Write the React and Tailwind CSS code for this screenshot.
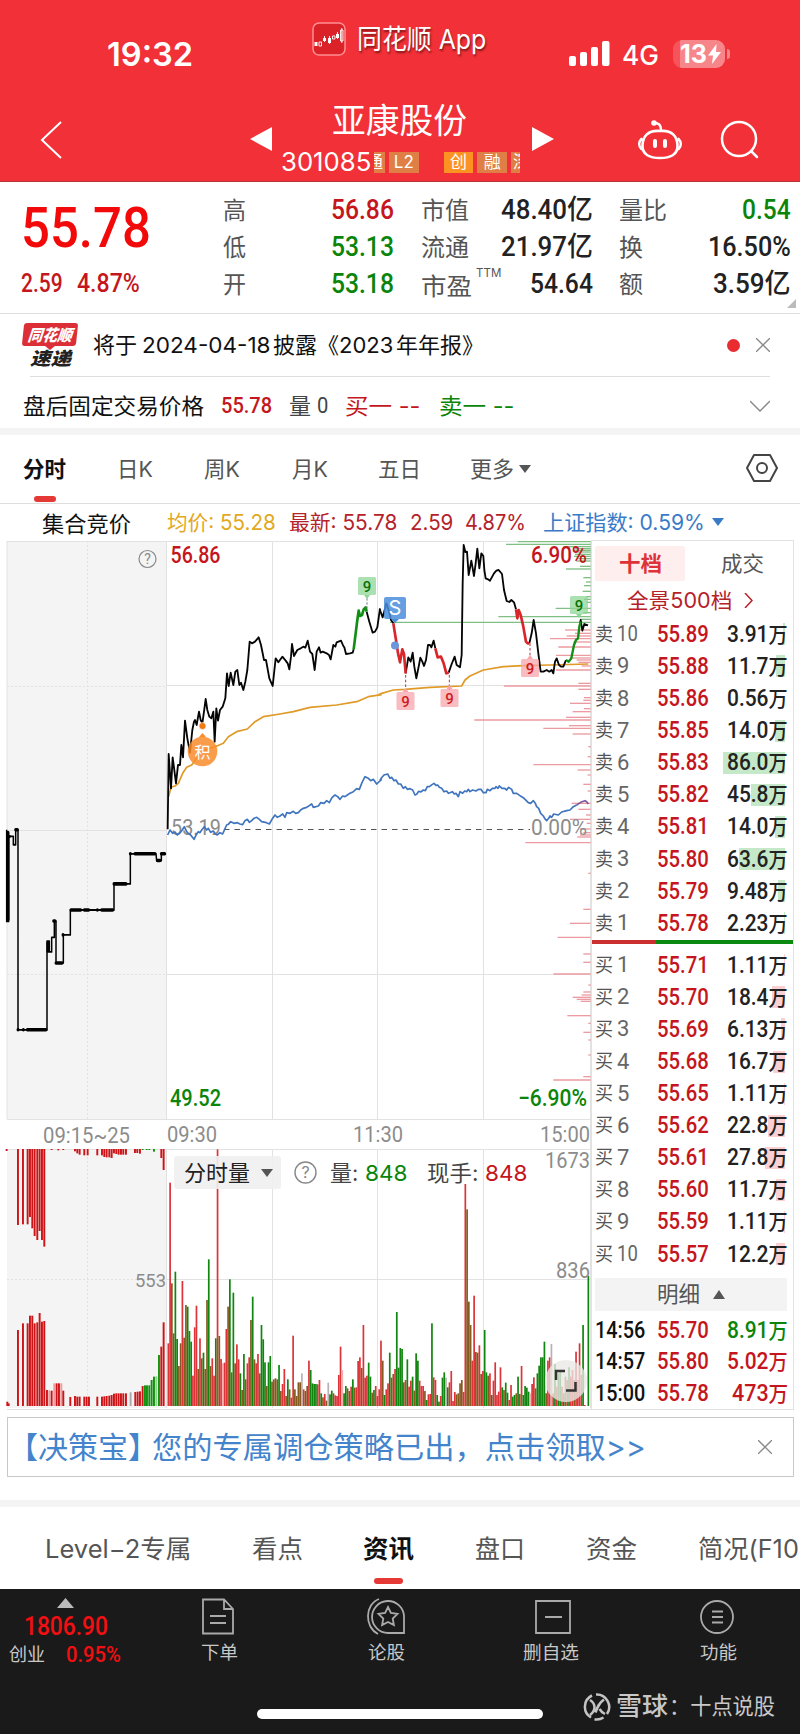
import React, { useLayoutEffect, useRef, useState } from "react";

const UI = "font-['Inter','Noto_Sans_CJK_SC',sans-serif]";
const NUM = "font-['Roboto','Noto_Sans_CJK_SC',sans-serif]";

/* Text squeezed or stretched horizontally to the width of its box. */
function Fit({ className = "", children }) {
  const box = useRef(null);
  const text = useRef(null);
  const [scale, setScale] = useState(1);
  useLayoutEffect(() => {
    if (box.current && text.current && text.current.offsetWidth) {
      setScale(box.current.clientWidth / text.current.offsetWidth);
    }
  }, [children]);
  return (
    <span ref={box} className={`flex shrink-0 whitespace-nowrap leading-none ${className}`}>
      <span ref={text} className="inline-block shrink-0 origin-left" style={{ transform: `scaleX(${scale})` }}>
        {children}
      </span>
    </span>
  );
}

function Header() {
  return (
    <header className="flex h-[182px] flex-col border-b border-[#b8323a] bg-[#f23037] text-white">
      <div className="flex h-[92px] items-start">
        <Fit className="ml-[107px] mt-[38px] w-[86px] text-[33px] font-semibold">19:32</Fit>
        <svg className="ml-[119px] mt-[22px] h-[34px] w-[34px] shrink-0" viewBox="0 0 34 34">
          <rect x="1" y="1" width="32" height="32" rx="6" fill="#dc2229" stroke="#ff8f92" strokeWidth="1.5" />
          <g fill="#fff">
            <rect x="2.500" y="20" width="3" height="4" /><rect x="11" y="16" width="3" height="3" />
            <rect x="16" y="16" width="3" height="5" /><rect x="24" y="12" width="3" height="4" />
          </g>
          <g fill="none" stroke="#fff" strokeWidth=".9"><path d="M7 20h2.500v4h-2.500zM20.500 14h2.500v3h-2.500zM28.500 8h2.500v11h-2.500zM12.500 14v6M17.500 14v8M25.500 10v7M29.800 6v15" /></g>
        </svg>
        <Fit className="ml-[11px] mt-[26px] w-[129px] text-[27px] [text-shadow:1px_2px_2px_#501010b0]">同花顺 App</Fit>
        <svg className="ml-[83px] mt-[41px] h-[26px] w-[42px] shrink-0" viewBox="0 0 42 26" fill="#fff">
          <rect x="0" y="15" width="7" height="10" rx="2" /><rect x="11" y="11" width="7" height="14" rx="2" />
          <rect x="22" y="6" width="7" height="19" rx="2" /><rect x="33" y="0" width="7.500" height="25" rx="2" />
        </svg>
        <Fit className="ml-[11px] mt-[42px] w-[37px] text-[27px] font-medium">4G</Fit>
        <div className="ml-[14px] mt-[40px] flex h-[28px] w-[52px] items-center rounded-[9px] bg-[linear-gradient(90deg,#f6535a_7px,#f7868b_7px)]">
          <Fit className="ml-[7px] w-[27px] text-[25px] font-bold">13</Fit>
          <svg className="ml-[1px] h-[20px] w-[13px]" viewBox="0 0 13 20"><path d="M8.500 0L0 11.500h5L4 20l9-12H8z" fill="#fff" /></svg>
        </div>
        <div className="ml-[2px] mt-[49px] h-[10px] w-[3px] rounded-r-full bg-[#f7868b]" />
      </div>
      <div className="flex h-[89px] items-start">
        <svg className="ml-[40px] mt-[29px] h-[38px] w-[22px] shrink-0" viewBox="0 0 22 38"><path d="M21 1L2 19L21 37" fill="none" stroke="#fff" strokeWidth="2" /></svg>
        <svg className="ml-[188px] mt-[35px] h-[24px] w-[22px] shrink-0" viewBox="0 0 22 24"><path d="M22 0v24L0 12z" fill="#fff" /></svg>
        <div className="ml-[9px] flex w-[239px] flex-col">
          <Fit className="ml-[51px] mt-[12px] w-[135px] text-[34px]">亚康股份</Fit>
          <div className="mt-[12px] flex h-[24px] items-center">
            <Fit className="w-[90px] text-[26px]">301085</Fit>
            <div className="ml-[3px] flex h-[21px] w-[11px] items-center justify-end overflow-hidden bg-[#df7f46] pr-[2px] text-[17px]"><Fit className="w-[18px]">通</Fit></div>
            <div className="ml-[4px] flex h-[21px] w-[30px] items-center justify-center bg-[#df7f46]"><Fit className="w-[20px] text-[17px]">L2</Fit></div>
            <div className="ml-[25px] flex h-[21px] w-[30px] items-center justify-center bg-[#fb9323]"><Fit className="w-[17px] text-[17px]">创</Fit></div>
            <div className="ml-[4px] flex h-[21px] w-[30px] items-center justify-center bg-[#df7f46]"><Fit className="w-[17px] text-[17px]">融</Fit></div>
            <div className="ml-[4px] flex h-[21px] w-[9px] items-center overflow-hidden bg-[#df7f46] pl-[2px]"><Fit className="w-[17px] text-[17px]">深</Fit></div>
          </div>
        </div>
        <svg className="ml-[12px] mt-[35px] h-[24px] w-[22px] shrink-0" viewBox="0 0 22 24"><path d="M0 0v24L22 12z" fill="#fff" /></svg>
        <svg className="ml-[83px] mt-[27px] h-[42px] w-[46px] shrink-0" viewBox="0 0 46 42" fill="none" stroke="#fff" strokeWidth="2.600" strokeLinecap="round">
          <path d="M23 12C36 11 40 18 40.500 26C41 36 33 39 23 39S5 36 5.500 26C6 18 10 11 23 12z" />
          <path d="M24 11C24 6 22 4 17 4M4.500 20C1.500 23 1.500 27 4.500 30M41.500 20C44.500 23 44.500 27 41.500 30" />
          <circle cx="17" cy="4" r="1.500" fill="#fff" /><path d="M18 22v5M28 22v5" strokeWidth="4" />
        </svg>
        <svg className="ml-[37px] mt-[28px] h-[40px] w-[40px] shrink-0" viewBox="0 0 40 40" fill="none" stroke="#fff" strokeWidth="2.500" strokeLinecap="round">
          <circle cx="19" cy="19" r="17" /><path d="M31 31l6 6" />
        </svg>
      </div>
    </header>
  );
}

function Quote() {
  const L = "text-[24px] text-[#555]";
  const V = `${NUM} text-[27px] font-medium`;
  return (
    <section className="flex h-[132px] border-b border-[#dedede]">
      <div className="ml-[21px] flex w-[202px] shrink-0 flex-col">
        <Fit className={`${NUM} mt-[18px] w-[130px] text-[56px] font-medium text-[#f20a0a]`}>55.78</Fit>
        <div className={`${NUM} mt-[14px] flex text-[26px] font-medium text-[#c4161c]`}>
          <Fit className="w-[42px]">2.59</Fit>
          <Fit className="ml-[14px] w-[63px]">4.87%</Fit>
        </div>
      </div>
      <div className="flex w-[568px] shrink-0 flex-col pt-[10px]">
        <div className="flex h-[37px] items-center">
          <Fit className={`w-[23px] ${L}`}>高</Fit>
          <Fit className={`ml-[85px] w-[63px] text-[#c4161c] ${V}`}>56.86</Fit>
          <Fit className={`ml-[27px] w-[48px] ${L}`}>市值</Fit>
          <Fit className={`ml-[32px] w-[92px] text-[#222] ${V}`}>48.40亿</Fit>
          <Fit className={`ml-[26px] w-[48px] ${L}`}>量比</Fit>
          <Fit className={`ml-[75px] w-[49px] text-[#0a850a] ${V}`}>0.54</Fit>
        </div>
        <div className="flex h-[37px] items-center">
          <Fit className={`w-[23px] ${L}`}>低</Fit>
          <Fit className={`ml-[85px] w-[63px] text-[#0a850a] ${V}`}>53.13</Fit>
          <Fit className={`ml-[27px] w-[48px] ${L}`}>流通</Fit>
          <Fit className={`ml-[32px] w-[92px] text-[#222] ${V}`}>21.97亿</Fit>
          <Fit className={`ml-[26px] w-[24px] ${L}`}>换</Fit>
          <Fit className={`ml-[65px] w-[83px] text-[#222] ${V}`}>16.50%</Fit>
        </div>
        <div className="flex h-[37px] items-center">
          <Fit className={`w-[23px] ${L}`}>开</Fit>
          <Fit className={`ml-[85px] w-[63px] text-[#0a850a] ${V}`}>53.18</Fit>
          <Fit className={`ml-[27px] w-[51px] pt-[4px] ${L}`}>市盈</Fit>
          <Fit className="ml-[4px] w-[25px] pb-[24px] text-[12px] text-[#555]">TTM</Fit>
          <Fit className={`ml-[29px] w-[63px] text-[#222] ${V}`}>54.64</Fit>
          <Fit className={`ml-[26px] w-[24px] ${L}`}>额</Fit>
          <Fit className={`ml-[70px] w-[78px] text-[#222] ${V}`}>3.59亿</Fit>
        </div>
      </div>
      <svg className="mt-[117px] -ml-[4px] h-[9px] w-[9px] shrink-0" viewBox="0 0 9 9"><path d="M9 0v9H0z" fill="#bbb" /></svg>
    </section>
  );
}

function News() {
  return (
    <section>
      <div className="flex h-[62px] items-center">
        <div className="ml-[22px] flex w-[56px] shrink-0 flex-col items-center font-black italic">
          <div className="flex h-[23px] w-[54px] -skew-x-6 items-center justify-center rounded-[3px] bg-[#dc2e36] text-white"><Fit className="w-[44px] text-[16px]">同花顺</Fit></div>
          <svg className="h-[4px] w-[10px]" viewBox="0 0 10 4"><path d="M0 0h10L5 4z" fill="#dc2e36" /></svg>
          <Fit className="w-[41px] text-[18px] text-[#222]">速递</Fit>
        </div>
        <Fit className="ml-[15px] w-[44px] text-[22px] text-[#111]">将于</Fit>
        <Fit className="ml-[5px] w-[128px] text-[22px] text-[#111]">2024-04-18</Fit>
        <Fit className="ml-[3px] w-[66px] text-[22px] text-[#111]">披露《</Fit>
        <Fit className="w-[54px] text-[22px] text-[#111]">2023</Fit>
        <Fit className="ml-[3px] w-[88px] text-[22px] text-[#111]">年年报》</Fit>
        <div className="ml-[243px] h-[13px] w-[13px] shrink-0 rounded-full bg-[#e82c2f]" />
        <svg className="ml-[16px] h-[14px] w-[14px] shrink-0" viewBox="0 0 14 14"><path d="M0 0L14 14M14 0L0 14" stroke="#888" strokeWidth="1.300" /></svg>
      </div>
      <div className="ml-[30px] h-px w-[740px] bg-[#dedede]" />
      <div className="flex h-[51px] items-center pt-[7px] text-[22px]">
        <Fit className="ml-[23px] w-[181px] text-[#111]">盘后固定交易价格</Fit>
        <Fit className={`${NUM} ml-[17px] w-[51px] font-medium text-[#c4161c]`}>55.78</Fit>
        <Fit className="ml-[17px] w-[22px] text-[#444]">量</Fit>
        <Fit className={`${NUM} ml-[6px] w-[11px] text-[#444]`}>0</Fit>
        <Fit className="ml-[17px] w-[75px] text-[#c4161c]">买一 --</Fit>
        <Fit className="ml-[19px] w-[75px] text-[#0a850a]">卖一 --</Fit>
        <svg className="ml-[236px] h-[12px] w-[20px] shrink-0" viewBox="0 0 20 12"><path d="M0 1L10 11L20 1" fill="none" stroke="#888" strokeWidth="1.400" /></svg>
      </div>
      <div className="h-[7px] bg-[#f4f4f4]" />
    </section>
  );
}

function PeriodTabs() {
  return (
    <section>
      <div className="flex h-[69px] border-b border-[#dedede] text-[22px] text-[#555]">
        <div className="ml-[23px] flex flex-col">
          <Fit className="mt-[23px] w-[43px] font-bold text-[#111]">分时</Fit>
          <div className="ml-[11px] mt-[16px] h-[6px] w-[22px] rounded-full bg-[#e53935]" />
        </div>
        <Fit className="ml-[51px] mt-[23px] w-[36px]">日K</Fit>
        <Fit className="ml-[51px] mt-[23px] w-[36px]">周K</Fit>
        <Fit className="ml-[52px] mt-[23px] w-[36px]">月K</Fit>
        <Fit className="ml-[50px] mt-[23px] w-[43px]">五日</Fit>
        <Fit className="ml-[49px] mt-[23px] w-[44px]">更多</Fit>
        <svg className="ml-[5px] mt-[30px] h-[8px] w-[12px]" viewBox="0 0 12 8"><path d="M0 0h12L6 8z" fill="#555" /></svg>
        <svg className="ml-[214px] mt-[17px] h-[32px] w-[34px]" viewBox="0 0 34 32" fill="none" stroke="#444" strokeWidth="2"><path d="M9 3h16l7 13l-7 13H9L2 16z" strokeLinejoin="round" /><circle cx="17" cy="16" r="5" /></svg>
      </div>
      <div className="flex h-[36px] items-center text-[21px]">
        <Fit className="ml-[42px] w-[89px] pt-[3px] text-[22px] text-[#111]">集合竞价</Fit>
        <Fit className="ml-[36px] w-[109px] text-[#e3a91c]">均价: 55.28</Fit>
        <Fit className="ml-[13px] w-[108px] text-[#b5222a]">最新: 55.78</Fit>
        <Fit className="ml-[13px] w-[43px] text-[#b5222a]">2.59</Fit>
        <Fit className="ml-[12px] w-[61px] text-[#b5222a]">4.87%</Fit>
        <Fit className="ml-[17px] w-[162px] text-[#3a7bc8]">上证指数: 0.59%</Fit>
        <svg className="ml-[7px] h-[8px] w-[12px]" viewBox="0 0 12 8"><path d="M0 0h12L6 8z" fill="#3a7bc8" /></svg>
      </div>
    </section>
  );
}

/* One entry per trading minute: colour letter and the y of the bar's top, base line 888. */
const VOLUME =
  "r700 r218 b520 b670 g485 g687 b768 b700 r513 b683 b585 g590 g663 g695 r797 r652 r587 b777 r685 b745 g728 b777 b570 g448 b768 r745 r797 g685 r118 b678 r747 p760 r758 r657 b590 g508 b787 g548 b760 r703 r748 g790 b840 g732 b808 r760 r742 b630 g560 b748 r760 r732 b790 g645 g688 g757 b828 g757 g738 b815 b808 b805 b808 g765 b843 r822 r777 b858 g808 b838 r863 r677 b838 b858 b817 b817 w790 r838 b843 b828 r752 g780 g820 g822 g822 r823 r810 g850 b862 r852 b872 w818 g853 g842 b850 r856 r858 r795 r710 p780 g850 g828 b835 b843 r830 g808 b833 r832 r753 r742 b774 r645 r803 r797 g758 g800 b848 g840 r828 r858 r838 r692 b752 g855 r838 r820 g728 b803 b792 r777 g606 g773 g714 g717 b817 r810 g748 r830 r812 g800 b842 g730 g752 r812 r828 r828 b843 g870 r853 r852 g640 r802 r810 g855 g875 r858 g803 g787 w803 g832 r817 r783 r873 r846 b853 b850 b820 b810 r846 r222 b298 b575 b645 r752 r557 b726 b728 r706 b792 r783 g660 g787 b797 r790 g855 r812 r757 r855 r845 r772 g832 b840 g818 g848 r870 r825 g860 g855 b850 g800 b852 r768 g855 g828 g833 g845 p850 r822 r802 b835 g790 g767 g742 g742 g695 b850 r752 r742 w702 r850 g762 r830 g790 g780 r830 g850 b800 r810 g772 r800 r780 b810 r725 r810 r700 r795 g645 r885 n888 g498"
    .split(" ")
    .map((s) => [s[0], Number(s.slice(1))]);
const FILL = { r: "#dc3438", g: "#10850f", b: "#855a20", p: "#f3b0b0", w: "#b9b0b4", n: "none" };

const AUCTION_UP = [
  [22, 875], [26, 880], [54, 660], [69, 640], [83, 640], [90, 617], [97, 617], [104, 640], [112, 637], [119, 609], [126, 635], [133, 633],
  [141, 840], [148, 841, 1], [155, 842], [163, 820, 1], [170, 820], [177, 820], [184, 820, 1], [190, 842], [211, 861], [225, 858], [232, 860],
  [239, 860], [253, 860], [260, 860], [267, 860], [292, 860], [306, 860], [313, 859], [320, 858], [328, 857], [335, 855], [342, 851], [349, 850],
  [356, 850], [363, 850], [370, 850], [378, 850], [392, 847, 2], [406, 846], [413, 845], [420, 844], [428, 828], [435, 826, 3], [441, 826, 3],
  [448, 826, 3], [455, 810, 3], [462, 800, 3], [469, 799, 4], [477, 735, 3], [484, 710], [491, 637],
];
const AUCTION_DOWN = [
  [20, 123], [54, 345], [69, 343], [83, 343], [90, 321], [97, 355], [104, 378], [112, 390], [119, 363], [126, 390], [133, 410], [155, 120], [175, 121],
  [190, 120], [225, 124], [232, 130], [239, 134], [253, 136], [263, 136], [292, 136], [306, 136], [313, 141], [320, 142], [328, 142], [335, 144],
  [342, 130], [349, 132], [356, 134], [363, 134], [370, 134], [378, 134], [405, 129], [412, 129], [420, 131], [428, 120, 3], [440, 120, 3], [448, 120, 3], [462, 125, 3],
  [484, 144], [491, 180],
];
const AUCTION_FILL = ["#cc1518", "#f09a9c", "#aaa", "#12920f", "#8fd08f"];

/* Resting orders by price: y and the left end of each line, right edge 660. */
const ORDERS_SELL = [
  [35, 443], [43, 408], [50, 580], [56, 615], [61, 610], [66, 625], [73, 615], [79, 612], [86, 625], [93, 620], [109, 630], [117, 588], [143, 640], [156, 648],
  [167, 642], [184, 638], [200, 648], [208, 642], [217, 648], [235, 557], [248, 640], [260, 385], [268, 630], [277, 60],
];
const ORDERS_BUY = [
  [300, 585], [310, 615], [318, 590], [326, 540], [336, 610], [351, 565], [376, 558], [384, 600], [390, 620], [397, 625], [408, 635], [420, 558], [460, 625], [468, 402],
  [478, 625], [503, 642], [511, 640], [520, 600], [536, 642], [545, 608], [562, 588], [570, 313], [587, 597], [595, 520], [612, 608], [650, 655], [680, 653],
  [704, 490], [720, 623], [735, 653], [763, 640], [783, 653], [820, 605], [838, 625], [855, 648], [868, 600], [880, 650], [897, 630], [908, 640], [915, 630], [921, 622],
  [938, 466], [1030, 655], [1138, 640], [1180, 600], [1222, 563], [1272, 640], [1297, 640], [1332, 550], [1365, 655], [1386, 640], [1395, 635], [1402, 608], [1408, 620],
  [1414, 632], [1457, 592], [1480, 655], [1507, 640], [1530, 655], [1575, 655], [1640, 640], [1650, 550],
];

function Marker({ x, y, down, green }) {
  const bg = green ? "#8fd596" : "#f7a6ab";
  return (
    <g>
      <rect x={x - 9} y={y} width="18" height="18" rx="1.500" fill={bg} opacity=".75" />
      <path d={down ? `M${x - 3} ${y + 18}h6l-3 4z` : `M${x - 3} ${y}h6l-3 -4z`} fill={bg} />
      <text x={x} y={y + 15} textAnchor="middle" fontSize="15" fontWeight="500" fill={green ? "#077307" : "#cf1a20"}>9</text>
    </g>
  );
}

function Chart() {
  return (
    <div className="relative h-[871px] w-[592px] shrink-0">
      <svg className="block h-[871px] w-[592px] font-['Roboto','Noto_Sans_CJK_SC',sans-serif]" viewBox="0 540 592 871">
        <rect x="7" y="541" width="160" height="578" fill="#f4f4f4" />
        <rect x="7" y="1149" width="160" height="259" fill="#f4f4f4" />
        <g stroke="#e2e2e2" strokeWidth="1" fill="none">
          <path d="M7 541.500H592M7 541V1119M166.500 541V1119M7 1119.500H590M7 1149.500H590M166.500 1149V1408M272.500 541V1119M377.500 541V1119M483.500 541V1119M590.500 541V1408M272.500 1149V1408M377.500 1149V1408M483.500 1149V1408M166 685.500H590M166 974.500H590M166 1279.500H590M7 1409.500H592" />
          <path d="M87.500 541V1119M87.500 1149V1408M7 686.500H166M7 974.500H166M7 1279.500H166" strokeDasharray="2 2" />
          <path d="M7 830.500H166" />
        </g>
        <g transform="translate(370 530) scale(.33333)" strokeWidth="4">
          {ORDERS_SELL.map(([y, x]) => <path key={y} d={`M${x} ${y}H662`} stroke="#7fbf83" />)}
          {ORDERS_BUY.map(([y, x]) => <path key={y} d={`M${x} ${y}H662`} stroke="#eb9ba1" />)}
        </g>
        <g fill="#8c8c8c" fontSize="22">
          <text x="171" y="835" textLength="50" lengthAdjust="spacingAndGlyphs">53.19</text>
          <text x="531" y="835" textLength="56" lengthAdjust="spacingAndGlyphs">0.00%</text>
        </g>
        <path d="M224 829.500H530" stroke="#555" strokeWidth="1.200" strokeDasharray="5.500 5" />
        <g fill="none" strokeLinejoin="round">
          <g transform="translate(160 530) scale(.33333)">
            <path stroke="#df9a28" strokeWidth="5" d="M26 800L33 772L45 768L55 760L68 730L80 712L95 705L110 685L130 662L165 650L190 640L205 620L230 605L262 597L285 575L310 560L360 552L400 545L450 532L530 525L590 515L625 500L665 494" />
            <path stroke="#3f74bf" strokeWidth="5" d="M23 915L30 900L38 910L45 906L52 915L60 908L67 900L73 890L80 905L85 910L92 915L102 928L110 912L115 905L120 908L125 900L133 890L140 900L145 895L152 907L160 903L166 912L172 915L180 908L188 912L195 896L200 885L205 883L212 875L222 880L232 878L240 882L248 884L255 872L262 868L268 877L275 872L282 865L290 862L298 868L305 875L316 877L328 882L336 868L345 855L352 862L360 858L368 852L375 862L380 848L390 850L400 844L407 850L415 848L422 840L430 835L440 832L455 822L460 832L475 828L482 818L492 820L500 812L508 818L516 803L525 795L533 800L540 808L548 798L555 800L562 795L570 790L580 785L590 776L598 778L606 758L615 740L625 745L632 752L640 748L650 762L665 748" />
            <path stroke="#050505" strokeWidth="5.500" d="M23 898L26 672L33 775L38 682L48 760L54 705L60 705L64 645L69 682L75 572L82 625L90 668L97 600L102 575L105 570L110 585L117 545L122 570L127 580L132 545L137 507L142 540L148 560L154 565L160 545L164 635L169 535L174 572L180 540L188 530L196 505L201 430L206 468L212 428L220 465L226 425L232 420L238 465L243 458L250 480L256 455L262 420L269 335L276 340L285 335L296 322L303 345L312 390L318 390L328 445L338 468L347 385L355 397L367 380L377 392L383 400L388 418L393 380L396 342L402 378L412 360L422 355L430 350L436 353L443 332L450 365L457 372L464 420L470 365L477 352L482 368L488 365L500 370L507 375L512 388L520 345L526 350L530 337L543 332L550 348L553 352L558 372L570 370L578 368L581 358M620 245L628 275L638 308L645 305L652 292L660 235" />
            <path stroke="#118f14" strokeWidth="8" d="M581 358L587 310L592 270L596 242L600 258L606 255L611 238L617 232L620 245" />
          </g>
          <g transform="translate(370 530) scale(.33333)">
            <path stroke="#df9a28" strokeWidth="5" d="M25 494L35 490L70 480L105 478L180 472L275 468L285 450L300 438L340 420L400 410L460 407L540 405L655 402" />
            <path stroke="#3f74bf" strokeWidth="5" d="M30 751L36 742L42 735L53 732L60 745L65 742L72 752L78 750L85 762L92 762L100 775L106 770L112 778L120 776L128 780L135 795L140 793L146 784L152 786L160 780L166 782L172 770L178 770L186 764L192 760L198 766L203 765L208 772L215 775L222 785L230 783L235 790L240 788L247 785L253 792L258 790L265 800L270 785L278 790L284 783L290 785L295 778L300 785L308 780L318 783L325 778L333 778L340 788L348 788L352 778L360 782L367 775L375 775L378 770L384 775L388 768L396 775L404 775L410 780L416 772L425 778L430 790L440 790L450 797L460 803L475 818L482 820L490 812L496 820L500 830L506 835L512 850L520 858L526 868L530 872L536 865L540 858L545 862L551 852L565 855L575 846L590 842L600 840L610 830L620 825" />
            <path stroke="#7a5a9c" strokeWidth="5" d="M620 825L632 817L645 812L650 815L655 822" />
            <path stroke="#050505" strokeWidth="5.500" d="M29 238L38 262L44 240L49 220L56 240L63 270L70 280M107 430L112 400L115 382L122 395L128 368L133 410L139 445L147 405L151 383L157 395L162 408L168 390L174 345L180 345L184 352L191 332L196 355M236 428L245 402L254 380L260 405L270 412L275 375L278 160L281 45L286 66L291 65L296 135L304 92L312 138L317 100L322 56L328 115L334 70L340 78L343 120L347 145L354 148L360 152L372 130L379 122L386 120L396 132L402 180L410 213L418 216L424 210L432 217L438 238M478 340L485 310L491 270L498 310L505 370L512 425L520 425L530 420L538 425L545 420L550 430L555 395L560 385L567 405L573 410L580 410L588 390M630 285L632 270L637 302L643 282L654 286" />
            <path stroke="#d9262b" strokeWidth="8" d="M70 280L74 305L78 330L84 370L90 397L97 358L102 372L107 430M196 355L203 382L213 380L221 400L229 430L236 428M438 238L442 265L446 240L452 255L460 290L468 335L473 340L478 340" />
            <path stroke="#118f14" strokeWidth="7" d="M588 390L596 395L604 385L612 345L618 330L624 325L628 290L632 275" />
            <path stroke="#b3333a" strokeWidth="3" strokeDasharray="8 6" d="M107 435V490M238 435V480M480 340V385" />
            <path stroke="#777" strokeWidth="3" strokeDasharray="7 5" d="M-9 205V235" />
          </g>
          <g transform="translate(0 530) scale(.33333 .39541)">
            <path stroke="#000" strokeWidth="4.500" d="M20 758V990H26V775H40V796H47V758H54V1264H141V1040H148V1067H155V1030H163V989H168V1095H190V1024H211V961H342V895H391V819H468L470 836H484V819H498" />
            <path stroke="#000" strokeWidth="9" strokeLinecap="round" d="M24 765V985M54 1264h.1M70 1264h.1M82 1264H138M144 1044V1065M168 1095H186M213 961H242M253 961H266M292 961h.1M305 961H338M342 895H378M391 819h.1M405 819H465M472 836H480M484 819H494M161 989H165M189 1024h.1M24 775H28M47 758H52" />
          </g>
        </g>
        <circle cx="202.500" cy="726" r="3.500" fill="#f17a15" stroke="#fff" strokeOpacity=".6" />
        <circle cx="202.500" cy="751.500" r="14.800" fill="#f98c2c" opacity=".85" />
        <path d="M199 737l3.500-4 3.500 4z" fill="#f98c2c" />
        <text x="202.500" y="757.500" textAnchor="middle" fontSize="16" fill="#fff">积</text>
        <Marker x={367} y={577} down green />
        <Marker x={579} y={596} down green />
        <Marker x={405.500} y={692} />
        <Marker x={449.500} y={689} />
        <Marker x={530} y={659} />
        <rect x="384" y="597" width="22" height="22" rx="2" fill="#4a8ddc" opacity=".85" />
        <path d="M391 619h8l-4 4z" fill="#4a8ddc" />
        <circle cx="395" cy="645.500" r="4" fill="#6b96dc" />
        <text x="395" y="615" textAnchor="middle" fontSize="20" fill="#fff" className="font-['Inter']">S</text>
        <g fontSize="23" fontWeight="500">
          <text x="170.500" y="562.500" fill="#c4161c" textLength="50" lengthAdjust="spacingAndGlyphs">56.86</text>
          <text x="531" y="562.500" fill="#c4161c" textLength="56" lengthAdjust="spacingAndGlyphs">6.90%</text>
          <text x="170" y="1106" fill="#0a850a" textLength="51" lengthAdjust="spacingAndGlyphs">49.52</text>
          <text x="518" y="1106" fill="#0a850a" textLength="69" lengthAdjust="spacingAndGlyphs">−6.90%</text>
        </g>
        <circle cx="147.500" cy="559" r="8.500" fill="none" stroke="#888" strokeWidth="1.200" />
        <text x="147.500" y="564" textAnchor="middle" fontSize="14" fill="#888">?</text>
        <g fontSize="22" fill="#8c8c8c">
          <text x="43" y="1143" textLength="87" lengthAdjust="spacingAndGlyphs">09:15~25</text>
          <text x="167" y="1141.500" textLength="50" lengthAdjust="spacingAndGlyphs">09:30</text>
          <text x="353" y="1141.500" textLength="50" lengthAdjust="spacingAndGlyphs">11:30</text>
          <text x="540" y="1141.500" textLength="50" lengthAdjust="spacingAndGlyphs">15:00</text>
        </g>
        <g transform="translate(0 1110) scale(.33333)">
          {AUCTION_UP.map(([x, y, c = 0]) => <rect key={x} x={x - 3} y={y} width="5.800" height={888 - y} fill={AUCTION_FILL[c]} />)}
          {AUCTION_DOWN.map(([x, y, c = 0]) => <rect key={x} x={x - 3} y="117" width="5.800" height={y - 117} fill={AUCTION_FILL[c]} />)}
          {VOLUME.map(([c, y], i) => <rect key={i} x={502.500 + 5.272 * i} y={y} width="5.100" height={888 - y} fill={FILL[c]} />)}
        </g>
        <g fontSize="22" fill="#8c8c8c">
          <text x="545" y="1168" textLength="45" lengthAdjust="spacingAndGlyphs">1673</text>
          <text x="556" y="1278" textLength="34" lengthAdjust="spacingAndGlyphs">836</text>
          <text x="135" y="1286.500" fontSize="18" textLength="31" lengthAdjust="spacingAndGlyphs">553</text>
        </g>
        <circle cx="566" cy="1381" r="21" fill="#ebe8e6" opacity=".78" />
        <path d="M556 1380V1371H565M575.500 1382V1390.500H566" fill="none" stroke="#333" strokeWidth="2.500" />
      </svg>
      <div className="absolute left-[174px] top-[616px] flex h-[33px] w-[360px] items-center text-[22px]">
        <div className="flex h-[33px] w-[107px] items-center rounded-[3px] bg-[#f0f0f0e6]">
          <Fit className="ml-[10px] w-[66px] text-[#222]">分时量</Fit>
          <svg className="ml-[11px] h-[8px] w-[12px]" viewBox="0 0 12 8"><path d="M0 0h12L6 8z" fill="#555" /></svg>
        </div>
        <svg className="ml-[13px] h-[23px] w-[23px]" viewBox="0 0 23 23"><circle cx="11.500" cy="11.500" r="10.500" fill="none" stroke="#888" strokeWidth="1.400" /><text x="11.500" y="17" textAnchor="middle" fontSize="16" fill="#888">?</text></svg>
        <Fit className="ml-[13px] w-[28px] text-[#444]">量:</Fit>
        <Fit className="ml-[7px] w-[42px] text-[#0a850a]">848</Fit>
        <Fit className="ml-[20px] w-[51px] text-[#444]">现手:</Fit>
        <Fit className="ml-[7px] w-[42px] text-[#c4161c]">848</Fit>
      </div>
    </div>
  );
}

const ASKS = [
  ["10", "55.89", "3.91", "w-[2px]"], ["9", "55.88", "11.7", "w-[9px]"], ["8", "55.86", "0.56", "w-0"], ["7", "55.85", "14.0", "w-[10px]"],
  ["6", "55.83", "86.0", "w-[62px]"], ["5", "55.82", "45.8", "w-[34px]"], ["4", "55.81", "14.0", "w-[10px]"], ["3", "55.80", "63.6", "w-[46px]"],
  ["2", "55.79", "9.48", "w-[7px]"], ["1", "55.78", "2.23", "w-[1px]"],
];
const BIDS = [
  ["1", "55.71", "1.11", "w-[1px]"], ["2", "55.70", "18.4", "w-[13px]"], ["3", "55.69", "6.13", "w-[4px]"], ["4", "55.68", "16.7", "w-[12px]"],
  ["5", "55.65", "1.11", "w-[1px]"], ["6", "55.62", "22.8", "w-[17px]"], ["7", "55.61", "27.8", "w-[20px]"], ["8", "55.60", "11.7", "w-[9px]"],
  ["9", "55.59", "1.11", "w-[1px]"], ["10", "55.57", "12.2", "w-[9px]"],
];

function Level({ side, row }) {
  const [n, price, vol, bar] = row;
  return (
    <div className="flex h-[32.1px] items-center">
      <Fit className="w-[18px] text-[19px] text-[#555]">{side}</Fit>
      <Fit className={`ml-[4px] text-[22px] text-[#666] ${NUM} ${n === "10" ? "w-[21px] mr-[19px]" : "w-[12px] mr-[28px]"}`}>{n}</Fit>
      <Fit className={`w-[52px] text-[23px] font-medium text-[#c4161c] ${NUM}`}>{price}</Fit>
      <div className="relative ml-[18px] flex h-[22px] w-[61px] items-center">
        <div className={`absolute right-[3px] top-0 h-[22px] ${side === "卖" ? "bg-[#c5e9c8]" : "bg-[#fbd0d3]"} ${bar}`} />
        <Fit className={`relative w-[61px] font-medium text-[#222] ${NUM} text-[23px]`}>{vol}<span className="text-[21px]">万</span></Fit>
      </div>
    </div>
  );
}

function Depth() {
  return (
    <div className="-ml-px flex h-[870px] w-[203px] flex-col border border-[#e2e2e2] pl-[3px]">
      <div className="mt-[5px] flex h-[35px] items-center text-[21px]">
        <div className="flex h-[35px] w-[90px] items-center justify-center rounded-[2px] bg-[#feefee]"><Fit className="w-[43px] font-bold text-[#dd3338]">十档</Fit></div>
        <Fit className="ml-[36px] w-[43px] text-[#555]">成交</Fit>
      </div>
      <div className="flex h-[38px] items-center pt-[2px]">
        <Fit className="ml-[32px] w-[105px] text-[21px] text-[#b5222a]">全景500档</Fit>
        <svg className="ml-[12px] h-[15px] w-[9px]" viewBox="0 0 9 15"><path d="M1 0l7 7.500L1 15" fill="none" stroke="#b5222a" strokeWidth="1.500" /></svg>
      </div>
      <div className="flex flex-col">{ASKS.map((r) => <Level key={r[0]} side="卖" row={r} />)}</div>
      <div className="-ml-[3px] mt-[1px] flex h-[4px]"><div className="w-[64px] bg-[#c9302f]" /><div className="flex-1 bg-[#0b8a12]" /></div>
      <div className="mt-[5px] flex flex-col">{BIDS.map((r) => <Level key={r[0]} side="买" row={r} />)}</div>
      <div className="mt-[8px] flex h-[33px] w-[192px] items-center justify-center bg-[#f3f3f3] text-[22px] text-[#555]">
        <Fit className="w-[43px]">明细</Fit>
        <svg className="ml-[13px] h-[9px] w-[12px]" viewBox="0 0 12 9"><path d="M0 9h12L6 0z" fill="#555" /></svg>
      </div>
      <div className={`mt-[4px] flex flex-col text-[23px] ${NUM}`}>
        {[["14:56", "55.70", "8.91", "text-[#0a850a]"], ["14:57", "55.80", "5.02", "text-[#c4161c]"], ["15:00", "55.78", "473", "text-[#c4161c]"]].map(([t, p, v, c]) => (
          <div key={t} className="flex h-[31.500px] items-center font-medium">
            <Fit className="w-[50px] text-[#111]">{t}</Fit>
            <Fit className="ml-[12px] w-[52px] text-[#c4161c]">{p}</Fit>
            <Fit className={`${c} ${v === "473" ? "ml-[23px] w-[56px]" : "ml-[18px] w-[61px]"}`}>{v}<span className="text-[21px]">万</span></Fit>
          </div>
        ))}
      </div>
    </div>
  );
}

function Banner() {
  return (
    <section>
      <div className="ml-[7px] mt-[6px] flex h-[60px] w-[787px] items-center border border-[#c9c9c9] text-[30px] text-[#4484cc]">
        <Fit className="w-[150px]">【决策宝】</Fit>
        <Fit className="-ml-[6px] w-[494px]">您的专属调仓策略已出，点击领取&gt;&gt;</Fit>
        <svg className="ml-[112px] h-[14px] w-[14px]" viewBox="0 0 14 14"><path d="M0 0L14 14M14 0L0 14" stroke="#888" strokeWidth="1.300" /></svg>
      </div>
      <div className="mt-[23px] h-[7px] bg-[#f4f4f4]" />
    </section>
  );
}

function InfoTabs() {
  return (
    <nav className="flex h-[82px] overflow-hidden text-[25px] text-[#555]">
      <Fit className="ml-[45px] mt-[30px] w-[146px]">Level−2专属</Fit>
      <Fit className="ml-[61px] mt-[30px] w-[51px]">看点</Fit>
      <div className="ml-[60px] flex shrink-0 flex-col">
        <Fit className="mt-[30px] w-[51px] font-bold text-[#111]">资讯</Fit>
        <div className="ml-[11px] mt-[16px] h-[6px] w-[29px] rounded-full bg-[#e53935]" />
      </div>
      <Fit className="ml-[61px] mt-[30px] w-[50px]">盘口</Fit>
      <Fit className="ml-[61px] mt-[30px] w-[51px]">资金</Fit>
      <Fit className="ml-[61px] mt-[30px] w-[101px]">简况(F10</Fit>
    </nav>
  );
}

function BottomBar() {
  return (
    <footer className="flex h-[145px] flex-col bg-[#1a1a1a] text-[#c8c8c8]">
      <div className="flex h-[86px] items-start text-[18px]">
        <div className="ml-[9px] flex w-[113px] shrink-0 flex-col">
          <svg className="ml-[48px] mt-[9px] h-[10px] w-[17px]" viewBox="0 0 17 10"><path d="M8.500 0L17 10H0z" fill="#bbb" /></svg>
          <Fit className={`${NUM} ml-[15px] mt-[5px] w-[84px] text-[26px] font-medium text-[#f20f12]`}>1806.90</Fit>
          <div className="mt-[5px] flex items-center">
            <Fit className="w-[36px]">创业</Fit>
            <Fit className={`${NUM} ml-[21px] w-[55px] text-[22px] font-medium text-[#f20f12]`}>0.95%</Fit>
          </div>
        </div>
        <div className="ml-[78px] mt-[9px] flex w-[38px] shrink-0 flex-col items-center">
          <svg className="-ml-[2px] h-[37px] w-[34px]" viewBox="0 0 34 37" fill="none" stroke="#aaa" strokeWidth="1.800"><path d="M2 1.500H23L32 11V35.500H2zM23 1.500V11H32M9 18H25M9 25H25" /></svg>
          <Fit className="mt-[9px] w-[37px]">下单</Fit>
        </div>
        <div className="ml-[128px] mt-[9px] flex w-[40px] shrink-0 flex-col items-center">
          <svg className="h-[37px] w-[40px]" viewBox="0 0 40 37" fill="none" stroke="#aaa" strokeWidth="1.800"><path d="M38 35V18A16 16 0 1 0 22 35zM13 1C-1 6 -2 29 12 36M22 9l2.900 6 6.600.9-4.800 4.600 1.200 6.500-5.900-3.100-5.900 3.100 1.200-6.500-4.800-4.600 6.600-.9z" /></svg>
          <Fit className="mt-[9px] w-[37px]">论股</Fit>
        </div>
        <div className="ml-[117px] mt-[9px] flex w-[56px] shrink-0 flex-col items-center">
          <svg className="ml-[4px] h-[37px] w-[36px]" viewBox="0 0 36 37" fill="none" stroke="#aaa" strokeWidth="1.800"><path d="M1 3H35V35H1zM10 19H27" /></svg>
          <Fit className="mt-[9px] w-[56px]">删自选</Fit>
        </div>
        <div className="ml-[120px] mt-[9px] flex w-[38px] shrink-0 flex-col items-center">
          <svg className="h-[37px] w-[36px]" viewBox="0 0 36 37" fill="none" stroke="#aaa" strokeWidth="1.800"><circle cx="17" cy="19" r="16" /><path d="M12 13.500H23M12 19H23M12 24.500H23" /></svg>
          <Fit className="mt-[9px] w-[37px]">功能</Fit>
        </div>
      </div>
      <div className="flex h-[59px] items-start">
        <div className="ml-[257px] mt-[34px] h-[10px] w-[286px] shrink-0 rounded-full bg-white" />
        <svg className="ml-[39px] mt-[17px] h-[30px] w-[30px] shrink-0" viewBox="0 0 30 30" fill="none" stroke="#c4c4c4" strokeWidth="2.500"><path d="M9 25.500A12.500 12.500 0 0 1 10 3.500M14 2.500A12.500 12.500 0 0 1 25 22M21.500 25.500A12.500 12.500 0 0 1 12.500 27.300M8 8C14 12 14 18 8 23M22 7.500C17 11 15.500 15 13.500 20.500M17.500 17C19 19.500 20 20.500 23 22" /></svg>
        <Fit className="ml-[4px] mt-[19px] w-[52px] text-[25px] font-medium">雪球</Fit>
        <Fit className="ml-[1px] mt-[20px] w-[106px] text-[22px]">：十点说股</Fit>
      </div>
    </footer>
  );
}

export default function App() {
  return (
    <main className={`flex h-[1734px] w-[800px] flex-col overflow-hidden bg-white ${UI}`}>
      <Header />
      <Quote />
      <News />
      <PeriodTabs />
      <div className="flex h-[871px]">
        <Chart />
        <Depth />
      </div>
      <Banner />
      <InfoTabs />
      <BottomBar />
    </main>
  );
}
